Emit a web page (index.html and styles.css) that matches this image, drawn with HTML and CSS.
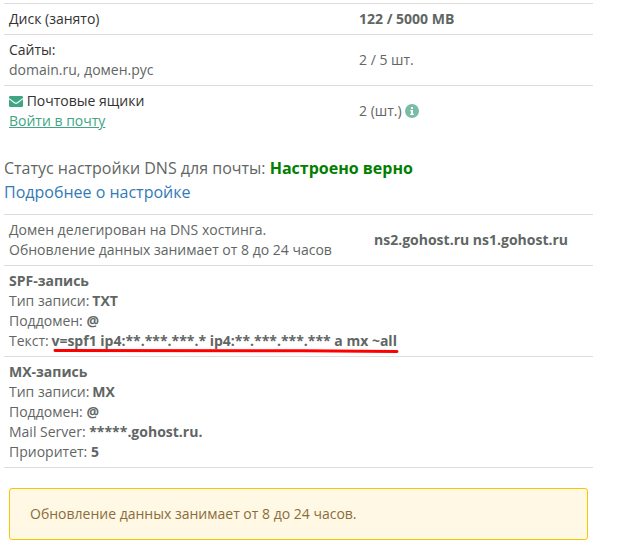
FILE: index.html
```html
<!DOCTYPE html>
<html lang="ru">
<head>
<meta charset="utf-8">
<title>Хостинг</title>
<link rel="stylesheet" href="styles.css">
</head>
<body>
<main class="page">
  <section class="table">
    <div class="row"><div class="cell dark">Диск (занято)</div><div class="cell value"><b>122 / 5000 MB</b></div></div>
    <div class="row"><div class="cell"><span class="dark">Сайты:</span><br>domain.ru, домен.рус</div><div class="cell value">2 / 5 шт.</div></div>
    <div class="row"><div class="cell"><svg class="mail" viewBox="0 0 14 11"><path d="M1.200 0h11.600Q14 0 14 1.200V1.900L8.200 6.300Q7 7.200 5.800 6.300L0 1.900V1.200Q0 0 1.200 0z"/><path d="M0 3.200l5.200 4Q7 8.500 8.800 7.200L14 3.200v6.600Q14 11 12.800 11H1.200Q0 11 0 9.800z"/></svg> <span class="dark">Почтовые ящики</span><br><a class="login" href="#">Войти в почту</a></div><div class="cell value">2 (шт.) <svg class="info" viewBox="0 0 14 14"><circle cx="7" cy="7" r="7"/><path d="M6 3h2v2H6zM5.200 6H8v3.700h.8V11H5.200V9.700H6V7.200h-.8z"/></svg></div></div>
  </section>
  <div class="status">Статус настройки DNS для почты: <b>Настроено верно</b><br><a href="#">Подробнее о настройке</a></div>
  <section class="table">
    <div class="row"><div class="cell">Домен делегирован на DNS хостинга.<br>Обновление данных занимает от 8 до 24 часов</div><div class="cell servers"><b>ns2.gohost.ru ns1.gohost.ru</b></div></div>
    <div class="row"><div class="cell full"><b>SPF-запись</b><br>Тип записи: <b class="type">TXT</b><br>Поддомен: <b>@</b><br>Текст: <b class="marked">v=spf1 ip4:**.***.***.* ip4:**.***.***.*** a mx ~all<svg class="underline" viewBox="0 0 346 6" preserveAspectRatio="none"><path d="M2 2.500L250 2.800 344 3.600"/></svg></b></div></div>
    <div class="row last"><div class="cell full"><b>MX-запись</b><br>Тип записи: <b class="type">MX</b><br>Поддомен: <b>@</b><br>Mail Server: <b>*****.gohost.ru.</b><br>Приоритет: <b>5</b></div></div>
  </section>
  <div class="notice">Обновление данных занимает от 8 до 24 часов.</div>
</main>
</body>
</html>
```

FILE: styles.css
```css
body { margin: 0; background: #fff; color: #5f6664; font: 14px/20px "Open Sans", sans-serif; }
.page { width: 589px; padding: 3px 0 0 4px; }
.row { display: flex; align-items: center; border-top: 1px solid #ddd; }
.row.last { border-bottom: 1px solid #ddd; }
.cell { box-sizing: border-box; width: 350px; padding: 5px; white-space: nowrap; }
.value { width: 239px; }
.servers { width: 239px; padding-left: 20px; }
.full { width: 100%; }
.dark { color: #333; }
.mail { width: 14px; height: 11px; fill: #40a583; vertical-align: -1px; }
.login { color: #40a583; text-decoration: underline; }
.info { width: 14px; height: 14px; vertical-align: -2px; fill: #79bda7; }
.info path { fill: #fff; }
.status { margin: 20px 0 10px; font-size: 16px; line-height: 24px; }
.status b { color: #008000; }
.status a { color: #337ab7; text-decoration: none; }
.type { margin-left: -.7px; }
.marked { position: relative; margin-left: -1px; }
.underline { position: absolute; left: 1.500px; bottom: -3.700px; width: 346px; height: 6px; overflow: visible; }
.underline path { fill: none; stroke: #ff0000; stroke-width: 3; stroke-linecap: round; }
.notice { margin: 20px 5px 0; padding: 15px 20px; border: 1px solid #f5c800; border-radius: 3px; background: #fff8e5; color: #8a6d3b; }
```
